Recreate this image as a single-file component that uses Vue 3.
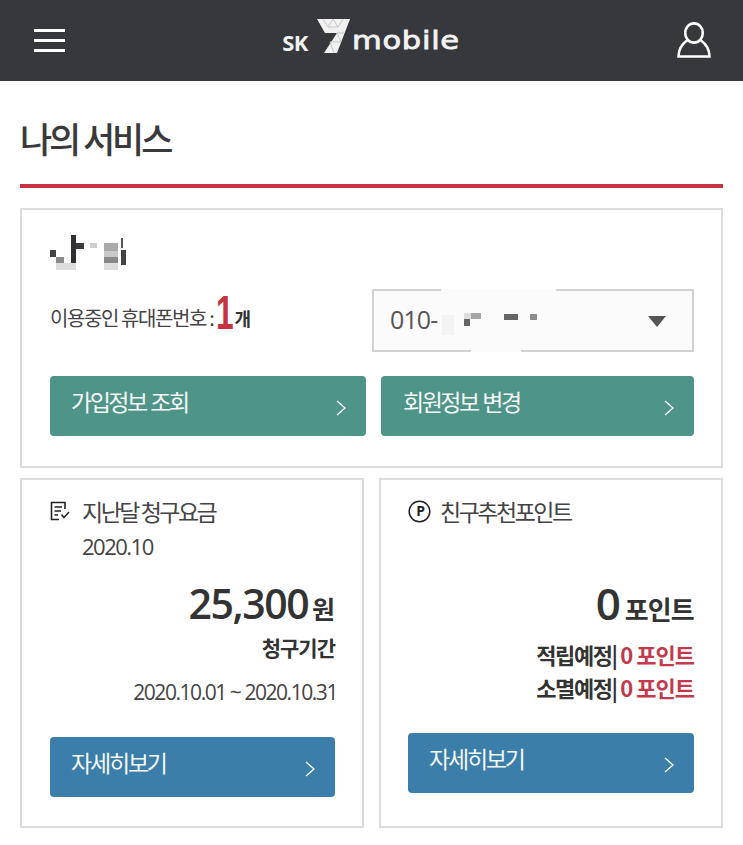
<script setup>
const nameCells = [
  [0, 15, 6, 7, '#444'], [6, 22, 8, 6, '#8a8a8a'], [6, 28, 20, 7, '#dcdcdc'],
  [21, 0, 5, 28, '#2f3033'], [26, 8, 8, 6, '#3a3b3e'], [40, 8, 7, 5, '#cfcfcf'],
  [54, 8, 14, 8, '#aaa'], [54, 16, 14, 6, '#c9c9c9'], [54, 22, 14, 6, '#888'],
  [54, 28, 14, 7, '#dedede'], [71, 3, 2, 10, '#555'], [71, 15, 5, 15, '#444']
]
const phoneCells = [
  [0, 2, 12, 20, '#f3f3f3'], [22, 0, 7, 6, '#ddd'], [22, 6, 6, 7, '#666'],
  [29, 0, 10, 6, '#a5a5a5'], [62, 1, 14, 6, '#666'], [88, 1, 7, 6, '#8c8c8c']
]
</script>

<template>
  <div class="page">
    <header class="topbar">
      <button class="icon-btn" aria-label="메뉴">
        <svg width="31" height="23" viewBox="0 0 31 23"><path d="M0 1.5h31M0 11.5h31M0 21.5h31" stroke="#fff" stroke-width="3" fill="none"/></svg>
      </button>
      <div class="logo">
        <span class="logo-sk">SK</span>
        <svg class="logo-seven" width="33" height="34" viewBox="0 0 33 34">
          <path d="M0 0H33L20 34H7L20 14H8Z" fill="#f1f1f1"/>
          <path d="M6 0 11 8 16 0 21 8 26 0M11 8H21M20 14H27M20 14 24 23H13M13 23 17 34" stroke="#c6c7c9" stroke-width="1" fill="none"/>
        </svg>
        <span class="logo-mobile">mobile</span>
      </div>
      <button class="icon-btn person" aria-label="내 정보">
        <svg width="34" height="36" viewBox="0 0 34 36"><ellipse cx="17" cy="11" rx="8.800" ry="9.600" stroke="#fff" stroke-width="2.600" fill="none"/><path d="M10.500 18C5 22 1.500 27.500 1.500 34.500H32.500C32.500 27.500 29 22 23.500 18" stroke="#fff" stroke-width="2.600" fill="none"/></svg>
      </button>
    </header>

    <main class="content">
      <h1 class="title">나의 서비스</h1>

      <section class="card user-card">
        <svg class="name-mask" width="77" height="35" viewBox="0 0 77 35">
          <rect v-for="(c, i) in nameCells" :key="i" :x="c[0]" :y="c[1]" :width="c[2]" :height="c[3]" :fill="c[4]"/>
        </svg>
        <div class="user-row">
          <p class="phones">이용중인 휴대폰번호 : <strong class="count">1</strong><b class="unit">개</b></p>
          <div class="select">
            <span class="select-value">010-</span>
            <svg class="phone-mask" width="95" height="24" viewBox="0 0 95 24">
              <rect v-for="(c, i) in phoneCells" :key="i" :x="c[0]" :y="c[1]" :width="c[2]" :height="c[3]" :fill="c[4]"/>
            </svg>
            <svg class="caret" width="18" height="11" viewBox="0 0 18 11"><path d="M0 0H18L9 11Z" fill="#555"/></svg>
            <i class="gap gap-top"></i>
            <i class="gap gap-bottom"></i>
          </div>
        </div>
        <div class="user-actions">
          <a class="btn btn-green wide-a">가입정보 조회
            <svg class="chev" width="10" height="16" viewBox="0 0 10 16"><path d="M1 1 9 8 1 15" stroke="#fff" stroke-width="1.3" fill="none"/></svg>
          </a>
          <a class="btn btn-green wide-b">회원정보 변경
            <svg class="chev" width="10" height="16" viewBox="0 0 10 16"><path d="M1 1 9 8 1 15" stroke="#fff" stroke-width="1.3" fill="none"/></svg>
          </a>
        </div>
      </section>

      <div class="cols">
        <section class="card col bill">
          <div class="col-head">
            <svg class="head-icon" width="20" height="20" viewBox="0 0 20 20"><path d="M15 8V1.500H1.500V18.500H9M4.500 6H12M4.500 10H11M4.500 14H8" stroke="#222" stroke-width="1.600" fill="none"/><path d="M11.500 13.500 14 16.500 19 11" stroke="#222" stroke-width="1.500" fill="none"/></svg>
            <span>지난달 청구요금</span>
          </div>
          <div class="col-date">2020.10</div>
          <div class="amount"><span class="big">25,300</span> <span class="big-unit">원</span></div>
          <div class="period-label">청구기간</div>
          <div class="period">2020.10.01 ~ 2020.10.31</div>
          <a class="btn btn-blue">자세히보기
            <svg class="chev" width="10" height="16" viewBox="0 0 10 16"><path d="M1 1 9 8 1 15" stroke="#fff" stroke-width="1.3" fill="none"/></svg>
          </a>
        </section>

        <section class="card col points">
          <div class="col-head">
            <svg class="head-icon" width="23" height="23" viewBox="0 0 23 23"><circle cx="11.500" cy="11.500" r="10.300" stroke="#222" stroke-width="1.500" fill="none"/><text x="11.500" y="16" text-anchor="middle" class="p-mark">P</text></svg>
            <span>친구추천포인트</span>
          </div>
          <div class="amount amount-points"><span class="big zero">0</span> <span class="big-unit pt">포인트</span></div>
          <div class="pt-row pt-first">적립예정| <em>0 포인트</em></div>
          <div class="pt-row pt-second">소멸예정| <em>0 포인트</em></div>
          <a class="btn btn-blue btn-points">자세히보기
            <svg class="chev" width="10" height="16" viewBox="0 0 10 16"><path d="M1 1 9 8 1 15" stroke="#fff" stroke-width="1.3" fill="none"/></svg>
          </a>
        </section>
      </div>
    </main>
  </div>
</template>

<style>
html, body { margin: 0; background: #fff; }
</style>

<style scoped>
.page {
  width: 743px;
  height: 845px;
  overflow: hidden;
  background: #fff;
  color: #333;
  font-family: "Noto Sans CJK KR", "Noto Sans", sans-serif;
}
.topbar {
  height: 81px;
  background: #36383c;
  box-sizing: border-box;
  padding: 0 32px 0 34px;
  display: flex;
  align-items: center;
  justify-content: space-between;
}
.icon-btn { background: none; border: 0; padding: 0; display: flex; }
.person { margin-top: -2px; }
.logo { display: flex; align-items: flex-end; height: 46px; color: #f2f2f2; margin-top: -13px; }
.logo-sk { font: 700 22px/1 "Open Sans", sans-serif; margin-bottom: 4px; letter-spacing: -.6px; }
.logo-seven { margin: 0 0 4px 9px; }
.logo-mobile {
  font: 400 25px/1 "DejaVu Sans", sans-serif;
  -webkit-text-stroke: .8px #f2f2f2;
  margin-left: 2px;
  margin-bottom: 4px;
  letter-spacing: .6px;
  transform: scaleX(1.22);
  transform-origin: left bottom;
  width: 108px;
}

.content { padding: 0 20px; }
.title {
  margin: 0;
  height: 107px;
  box-sizing: border-box;
  padding-top: 34px;
  font-size: 35px;
  line-height: 46px;
  font-weight: 500;
  letter-spacing: -3.1px;
  color: #3a3a3c;
  border-bottom: 4px solid #c9313f;
}
.card { border: 2px solid #dcdcdc; box-sizing: border-box; background: #fff; }
.user-card {
  margin-top: 20px;
  height: 260px;
  padding: 25px 27px 0 28px;
  position: relative;
}
.name-mask { display: block; }
.user-row { display: flex; justify-content: space-between; align-items: flex-start; margin-top: 19px; }
.phones {
  margin: 0;
  font-size: 20px;
  line-height: 28px;
  letter-spacing: -1.4px;
  color: #444;
  height: 63px;
  display: flex;
  align-items: flex-end;
  padding-bottom: 20px;
  box-sizing: border-box;
  white-space: pre;
}
.count {
  font: 700 48px/40px "Liberation Sans", sans-serif;
  color: #c9313f;
  display: inline-block;
  letter-spacing: 0;
  width: 18px;
  transform: scaleX(.66);
  transform-origin: left center;
  position: relative;
  top: 1px;
}
.unit { font-weight: 700; font-size: 18px; color: #333; letter-spacing: 0; }
.select {
  width: 322px;
  height: 63px;
  box-sizing: border-box;
  border: 2px solid #d2d2d2;
  background: #fbfbfb;
  display: flex;
  align-items: center;
  padding: 0 26px 0 16px;
  position: relative;
}
.select-value { font: 400 25px/1 "Open Sans", sans-serif; letter-spacing: -.9px; color: #555; margin-top: -3px; }
.phone-mask { margin: 0 0 0 5px; position: relative; top: 4px; }
.caret { margin-left: auto; margin-top: 2px; }
.gap { position: absolute; background: #fbfbfb; height: 2px; }
.gap-top { top: -2px; left: 67px; width: 115px; }
.gap-bottom { bottom: -2px; left: 97px; width: 50px; }
.user-actions { display: flex; gap: 15px; margin-top: 24px; }
.btn {
  display: flex;
  align-items: flex-start;
  justify-content: space-between;
  height: 60px;
  box-sizing: border-box;
  border-radius: 4px;
  color: #f4f8f7;
  font-size: 23px;
  line-height: 34px;
  letter-spacing: -2.2px;
  padding: 8px 20px 0 21px;
}
.chev { margin-top: 16px; flex: none; }
.btn-green { background: #4f9587; letter-spacing: -2.5px; word-spacing: 2px; }
.wide-a { width: 316px; }
.wide-b { width: 313px; padding-left: 22px; }
.btn-blue { background: #3a7ea9; }

.cols { display: flex; justify-content: space-between; margin-top: 10px; }
.col { width: 344px; height: 350px; padding: 14px 27px 0 28px; }
.points { padding-left: 27px; }
.col-head { display: flex; align-items: center; font-size: 23px; line-height: 34px; letter-spacing: -2.5px; color: #444; }
.head-icon { flex: none; }
.bill .head-icon { margin-right: 12px; }
.points .head-icon { margin-right: 9px; }
.p-mark { font: 700 14px "Open Sans", sans-serif; fill: #222; }
.col-date { font: 400 22px/30px "Open Sans", sans-serif; letter-spacing: -1.5px; color: #444; margin: 3px 0 0 32px; }
.amount { text-align: right; margin-top: 15px; line-height: 54px; height: 54px; white-space: nowrap; }
.big { font: 600 41px/54px "Open Sans", sans-serif; letter-spacing: -1.4px; color: #333; }
.zero { font-size: 44px; letter-spacing: 0; }
.big-unit { font-size: 25px; font-weight: 700; color: #333; letter-spacing: 0; }
.period-label { text-align: right; font-size: 21px; font-weight: 700; line-height: 34px; letter-spacing: -1px; }
.period { text-align: right; font: 400 21px/30px "Open Sans", sans-serif; letter-spacing: -1.45px; color: #444; margin: 13px -2px 0 0; }
.bill .btn { margin-top: 30px; }
.amount-points { margin-top: 48px; }
.pt { font-size: 26px; letter-spacing: -.8px; }
.pt-row { text-align: right; font-size: 22px; font-weight: 700; line-height: 34px; letter-spacing: -1.4px; color: #333; white-space: pre; }
.pt-row em { font-style: normal; color: #c23a4c; letter-spacing: -1px; }
.pt-first { margin-top: 7px; }
.pt-second { margin-top: -1px; }
.btn-points { margin-top: 29px; }
</style>
